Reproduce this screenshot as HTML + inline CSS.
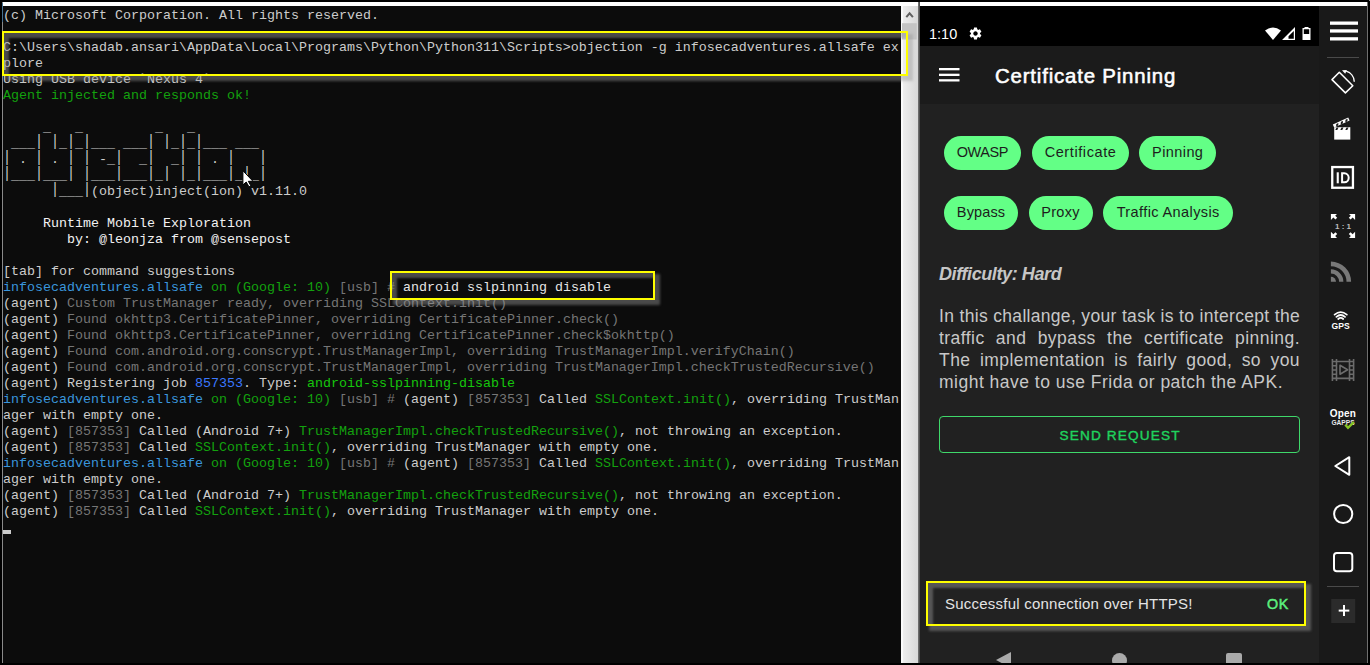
<!DOCTYPE html>
<html><head><meta charset="utf-8">
<style>
html,body{margin:0;padding:0}
body{width:1370px;height:665px;background:#000;overflow:hidden;position:relative}
.abs{position:absolute}
#topbar{left:3px;top:2px;width:1364px;height:4px;background:#fff}
#lline{left:2px;top:2px;width:1px;height:661px;background:#8a8a8a}
#term{left:3px;top:6px;width:898px;height:657px;background:#0c0c0c;overflow:hidden}
.r{position:absolute;left:0;height:16px;line-height:16px;margin-top:2px;white-space:pre;font-family:"Liberation Mono",monospace;font-size:13.34px;color:#cccccc}
.vb{font-style:normal;display:inline-block;transform:scaleY(1.18);transform-origin:50% 100%}
.g{color:#13a10e}.G{color:#16c60c}.b{color:#3a96dd}.B{color:#3b78ff}.k{color:#767676}.w{color:#f2f2f2}
#scroll{left:901px;top:6px;width:17px;height:657px;background:linear-gradient(90deg,#fafafa 0,#fafafa 1.5px,#ededed 2px,#d8d8d8 100%)}
#sdiv{left:918px;top:2px;width:2px;height:661px;background:linear-gradient(90deg,#7a7a7a,#404040)}
#phone{left:920px;top:6px;width:399px;height:657px;background:#212121;overflow:hidden;font-family:"Liberation Sans",sans-serif}
#side{left:1319px;top:6px;width:48px;height:657px;background:#191919}
#rline{left:1367px;top:2px;width:1px;height:661px;background:#707070}
.chip{position:absolute;height:34px;line-height:32.6px;border-radius:17px;background:#63ff86;color:#1d1d1d;font-size:14.5px;text-align:center;white-space:nowrap}
.para{font-size:17.5px;line-height:21.8px;color:#c8c8c8}
.pl{text-align:justify;text-align-last:justify;white-space:nowrap;height:21.8px}
.yb{position:absolute;border:2px solid #ffff00;box-sizing:border-box;box-shadow:4px 4px 2.5px 1px rgba(150,150,150,0.45),inset 4px 4px 2.5px 1px rgba(150,150,150,0.45)}
</style></head><body>
<div class="abs" id="lline"></div>
<div class="abs" style="left:2px;top:3px;width:1px;height:19px;background:#46708f"></div>
<div class="abs" id="topbar"></div>
<div class="abs" id="term">
<div class="r" style="top:0px">(c) Microsoft Corporation. All rights reserved.</div>
<div class="r" style="top:32px">C:\Users\shadab.ansari\AppData\Local\Programs\Python\Python311\Scripts&gt;objection -g infosecadventures.allsafe ex</div>
<div class="r" style="top:48px">plore</div>
<div class="r" style="top:64px">Using USB device `Nexus 4`</div>
<div class="r g" style="top:80px">Agent injected and responds ok!</div>
<div class="r" style="top:112px">     _   _         _   _</div>
<div class="r" style="top:128px"> ___<i class="vb">|</i> <i class="vb">|</i>_<i class="vb">|</i>_<i class="vb">|</i>___ ___<i class="vb">|</i> <i class="vb">|</i>_<i class="vb">|</i>_<i class="vb">|</i>___ ___</div>
<div class="r" style="top:144px"><i class="vb">|</i> . <i class="vb">|</i> . <i class="vb">|</i> <i class="vb">|</i> -_<i class="vb">|</i>  _<i class="vb">|</i>  _<i class="vb">|</i> <i class="vb">|</i> . <i class="vb">|</i>   <i class="vb">|</i></div>
<div class="r" style="top:160px"><i class="vb">|</i>___<i class="vb">|</i>___<i class="vb">|</i> <i class="vb">|</i>___<i class="vb">|</i>___<i class="vb">|</i>_<i class="vb">|</i> <i class="vb">|</i>_<i class="vb">|</i>___<i class="vb">|</i>_<i class="vb">|</i>_<i class="vb">|</i></div>
<div class="r" style="top:176px">      <i class="vb">|</i>___<i class="vb">|</i>(object)inject(ion) v1.11.0</div>
<div class="r w" style="top:208px">     Runtime Mobile Exploration</div>
<div class="r w" style="top:224px">        by: @leonjza from @sensepost</div>
<div class="r" style="top:256px">[tab] for command suggestions</div>
<div class="r" style="top:272px"><span class="b">infosecadventures.allsafe</span> <span class="g">on (Google: 10)</span> <span class="k">[usb]</span> <span class="k">#</span> <span style="color:#e6e6e6">android sslpinning disable</span></div>
<div class="r" style="top:288px">(agent) <span class="k">Custom TrustManager ready, overriding SSLContext.init()</span></div>
<div class="r" style="top:304px">(agent) <span class="k">Found okhttp3.CertificatePinner, overriding CertificatePinner.check()</span></div>
<div class="r" style="top:320px">(agent) <span class="k">Found okhttp3.CertificatePinner, overriding CertificatePinner.check$okhttp()</span></div>
<div class="r" style="top:336px">(agent) <span class="k">Found com.android.org.conscrypt.TrustManagerImpl, overriding TrustManagerImpl.verifyChain()</span></div>
<div class="r" style="top:352px">(agent) <span class="k">Found com.android.org.conscrypt.TrustManagerImpl, overriding TrustManagerImpl.checkTrustedRecursive()</span></div>
<div class="r" style="top:368px">(agent) Registering job <span class="B">857353</span>. Type: <span class="G">android-sslpinning-disable</span></div>
<div class="r" style="top:384px"><span class="b">infosecadventures.allsafe</span> <span class="g">on (Google: 10)</span> <span class="k">[usb]</span> <span class="k">#</span> (agent) <span class="k">[857353]</span> Called <span class="g">SSLContext.init()</span>, overriding TrustMan</div>
<div class="r" style="top:400px">ager with empty one.</div>
<div class="r" style="top:416px">(agent) <span class="k">[857353]</span> Called (Android 7+) <span class="g">TrustManagerImpl.checkTrustedRecursive()</span>, not throwing an exception.</div>
<div class="r" style="top:432px">(agent) <span class="k">[857353]</span> Called <span class="g">SSLContext.init()</span>, overriding TrustManager with empty one.</div>
<div class="r" style="top:448px"><span class="b">infosecadventures.allsafe</span> <span class="g">on (Google: 10)</span> <span class="k">[usb]</span> <span class="k">#</span> (agent) <span class="k">[857353]</span> Called <span class="g">SSLContext.init()</span>, overriding TrustMan</div>
<div class="r" style="top:464px">ager with empty one.</div>
<div class="r" style="top:480px">(agent) <span class="k">[857353]</span> Called (Android 7+) <span class="g">TrustManagerImpl.checkTrustedRecursive()</span>, not throwing an exception.</div>
<div class="r" style="top:496px">(agent) <span class="k">[857353]</span> Called <span class="g">SSLContext.init()</span>, overriding TrustManager with empty one.</div>
<div class="abs" style="left:0;top:524px;width:8px;height:4px;background:#cccccc"></div>
</div>
<div class="abs" id="scroll"></div>
<div class="abs" id="sdiv"></div>
<svg class="abs" style="left:901px;top:6px" width="17" height="40" viewBox="901 6 17 40"><path d="M906.3 17.2 L909.6 13.4 L912.9 17.2" fill="none" stroke="#606060" stroke-width="2"/><rect x="902" y="23.2" width="14.8" height="16.3" fill="#c4c4c4"/></svg>
<div class="abs" id="phone">
<div class="abs" style="left:0;top:0;width:399px;height:40px;background:#000"></div>
<div class="abs" style="left:9px;top:20px;font-size:14.5px;line-height:16px;color:#fff">1:10</div>
<svg class="abs" style="left:48px;top:20px" width="15" height="15" viewBox="0 0 24 24"><path fill="#fff" d="M19.14 12.94c.04-.3.06-.61.06-.94 0-.32-.02-.64-.07-.94l2.03-1.58a.49.49 0 0 0 .12-.61l-1.92-3.32a.488.488 0 0 0-.59-.22l-2.39.96c-.5-.38-1.03-.7-1.62-.94l-.36-2.54a.484.484 0 0 0-.48-.41h-3.84c-.24 0-.43.17-.47.41l-.36 2.54c-.59.24-1.13.57-1.62.94l-2.39-.96c-.22-.08-.47 0-.59.22L2.74 8.87c-.12.21-.08.47.12.61l2.03 1.58c-.05.3-.09.63-.09.94s.02.64.07.94l-2.03 1.58a.49.49 0 0 0-.12.61l1.92 3.32c.12.22.37.29.59.22l2.39-.96c.5.38 1.03.7 1.62.94l.36 2.54c.05.24.24.41.48.41h3.84c.24 0 .44-.17.47-.41l.36-2.54c.59-.24 1.13-.56 1.62-.94l2.39.96c.22.08.47 0 .59-.22l1.92-3.32c.12-.22.07-.47-.12-.61l-2.01-1.58zM12 15.6c-1.98 0-3.6-1.62-3.6-3.6s1.62-3.6 3.6-3.6 3.6 1.62 3.6 3.6-1.62 3.6-3.6 3.6z"/></svg>
<svg class="abs" style="left:344px;top:20px" width="50" height="15" viewBox="0 0 50 15">
<path fill="#fff" d="M1 4.5 Q9 -1.5 17 4.5 L9 14 Z"/>
<path fill="#fff" fill-rule="evenodd" d="M18 14 L31 1 L31 14 Z M24.5 12.8 L29.8 12.8 L29.8 5 L24.5 10.3 Z"/>
<path fill="#fff" fill-rule="evenodd" d="M40.5 1 L44.5 1 L44.5 2 L46.5 2 L46.5 14 L38.5 14 L38.5 2 L40.5 2 Z M39.8 3.3 L45.2 3.3 L45.2 8 L39.8 8 Z"/>
</svg>
<div class="abs" style="left:0;top:40px;width:399px;height:58px;background:#1b1b1b"></div>
<svg class="abs" style="left:19px;top:61px" width="21" height="16" viewBox="0 0 21 16"><rect x="0" y="1" width="20.5" height="2.3" fill="#fff"/><rect x="0" y="6.7" width="20.5" height="2.3" fill="#fff"/><rect x="0" y="12.2" width="20.5" height="2.3" fill="#fff"/></svg>
<div class="abs" style="left:75px;top:54.5px;font-size:20.4px;letter-spacing:0.82px;-webkit-text-stroke:0.55px #fff;line-height:30px;font-weight:normal;color:#fff;white-space:nowrap">Certificate Pinning</div>
<div class="chip" style="left:24px;top:130px;width:77px;letter-spacing:-0.45px;text-indent:-0.45px">OWASP</div>
<div class="chip" style="left:111.5px;top:130px;width:97.5px;letter-spacing:0.59px;text-indent:0.59px">Certificate</div>
<div class="chip" style="left:219px;top:130px;width:77px;letter-spacing:0.42px;text-indent:0.42px">Pinning</div>
<div class="chip" style="left:24px;top:190.2px;width:74px;letter-spacing:0.12px">Bypass</div>
<div class="chip" style="left:108.5px;top:190.2px;width:64px;letter-spacing:0.25px">Proxy</div>
<div class="chip" style="left:183px;top:190.2px;width:130px;letter-spacing:0.4px;text-indent:0.4px">Traffic Analysis</div>
<div class="abs" style="left:19px;top:256px;font-size:18px;letter-spacing:-0.4px;line-height:24px;font-weight:bold;font-style:italic;color:#c6c6c6;white-space:nowrap">Difficulty: Hard</div>
<div class="abs para" style="left:19px;top:300px;width:361px">
<div class="pl" style="letter-spacing:0.3px">In this challange, your task is to intercept the</div>
<div class="pl" style="letter-spacing:0.45px">traffic and bypass the certificate pinning.</div>
<div class="pl" style="letter-spacing:0.45px">The implementation is fairly good, so you</div>
<div class="pl" style="text-align-last:left;letter-spacing:0.49px;margin-top:1px">might have to use Frida or patch the APK.</div>
</div>
<div class="abs" style="left:19px;top:410px;width:361px;height:36.5px;box-sizing:border-box;border:1.5px solid #3fd86a;border-radius:4px"></div>
<div class="abs" style="left:19px;top:410px;width:361px;height:36.5px;line-height:39.4px;text-align:center;font-size:13.6px;font-weight:normal;-webkit-text-stroke:0.4px #1fd45e;letter-spacing:1.15px;text-indent:1.15px;color:#1fd45e">SEND REQUEST</div>
<div class="abs" style="left:8px;top:577px;width:378px;height:43px;background:#222"></div>
<div class="abs" style="left:25px;top:590px;font-size:15px;letter-spacing:0.23px;line-height:16px;color:#e4e4e4;white-space:nowrap">Successful connection over HTTPS!</div>
<div class="abs" style="left:347px;top:589.8px;font-size:14.3px;font-weight:normal;-webkit-text-stroke:0.5px #5cf07e;letter-spacing:0.7px;line-height:16px;color:#5cf07e;white-space:nowrap">OK</div>
<div class="abs" style="left:76px;top:646px;width:0;height:0;border-right:15px solid #aaa;border-top:8px solid transparent;border-bottom:8px solid transparent"></div>
<div class="abs" style="left:192px;top:647px;width:15px;height:15px;border-radius:50%;background:#aaa"></div>
<div class="abs" style="left:306px;top:646.5px;width:16px;height:16px;border-radius:2px;background:#aaa"></div>
</div>
<div class="abs" id="side"></div>
<svg class="abs" style="left:1319px;top:0" width="48" height="665" viewBox="1319 0 48 665">
<g fill="#fff"><rect x="1330" y="21.5" width="28" height="3.3"/><rect x="1330" y="29.3" width="28" height="3.3"/><rect x="1330" y="37.2" width="28" height="3.3"/></g>
<rect x="1327" y="57" width="32" height="1" fill="#4a4a4a"/>
<g fill="none" stroke="#fff" stroke-width="1.55" stroke-linejoin="round">
<path d="M1332 79.6 L1339.3 72.3 L1352.8 85.7 L1345.4 92.9 Z"/>
<path d="M1346.2 71.2 A11.4 11.4 0 0 1 1354.3 81.8" stroke-width="1.4"/>
</g>
<path fill="#fff" d="M1342 70.3 L1346.9 70 L1345.2 73.8 Z"/>
<g fill="#fff">
<rect x="1334.2" y="127.2" width="16.1" height="12.4"/>
<path d="M1332.8 124.4 L1348.2 117.4 L1349.6 120.6 L1334.2 127.6 Z"/>
</g>
<g fill="#1b1b1b">
<path d="M1336.5 127.4 L1338.5 127.4 L1337.3 129.9 L1335.3 129.9 Z"/>
<path d="M1341.5 127.4 L1343.5 127.4 L1342.3 129.9 L1340.3 129.9 Z"/>
<path d="M1346.5 127.4 L1348.5 127.4 L1347.3 129.9 L1345.3 129.9 Z"/>
<path d="M1336.3 123.9 L1338.4 123.0 L1338.2 125.6 L1336.1 126.5 Z"/>
<path d="M1340.9 121.8 L1343.0 120.9 L1342.8 123.5 L1340.7 124.4 Z"/>
<path d="M1345.5 119.7 L1347.6 118.8 L1347.4 121.4 L1345.3 122.3 Z"/>
</g>
<rect x="1332.25" y="167.05" width="20.7" height="20.7" fill="none" stroke="#fff" stroke-width="2.3"/>
<rect x="1336.7" y="172.3" width="2.1" height="11" fill="#fff"/>
<path d="M1342.1 173.3 h2.3 a4.3 4.5 0 0 1 0 9 h-2.3 z" fill="none" stroke="#fff" stroke-width="2"/>
<g fill="#fff">
<path d="M1330.9 213.9 L1337 213.9 L1335.2 215.7 L1337.2 217.7 L1335.4 219.5 L1333.4 217.5 L1330.9 220 Z"/>
<path d="M1355.1 213.9 L1349 213.9 L1350.8 215.7 L1348.8 217.7 L1350.6 219.5 L1352.6 217.5 L1355.1 220 Z"/>
<path d="M1330.9 237.9 L1337 237.9 L1335.2 236.1 L1337.2 234.1 L1335.4 232.3 L1333.4 234.3 L1330.9 231.8 Z"/>
<path d="M1355.1 237.9 L1349 237.9 L1350.8 236.1 L1348.8 234.1 L1350.6 232.3 L1352.6 234.3 L1355.1 231.8 Z"/>
</g>
<text x="1343" y="229" font-family="Liberation Sans" font-weight="bold" font-size="8" fill="#bdbdbd" text-anchor="middle">1 : 1</text>
<g fill="#787878">
<path d="M1330.9 281.8 L1330.9 276.7 A5.1 5.1 0 0 1 1336 281.8 Z"/>
<path d="M1330.9 269.3 A12.5 12.5 0 0 1 1343.4 281.8 L1339.1 281.8 A8.2 8.2 0 0 0 1330.9 273.6 Z"/>
<path d="M1330.9 261.6 A20.2 20.2 0 0 1 1351.1 281.8 L1346.5 281.8 A15.6 15.6 0 0 0 1330.9 266.2 Z"/>
</g>
<g fill="none" stroke="#fff" stroke-width="1.8" stroke-linecap="round">
<path d="M1334.6 314.6 Q1340.7 309.6 1346.8 314.6"/>
<path d="M1336.4 316.9 Q1340.7 313.2 1345 316.9"/>
<path d="M1338.2 319 Q1340.7 316.8 1343.2 319"/>
</g>
<text x="1340.6" y="328.9" font-family="Liberation Sans" font-weight="bold" font-size="8.6" fill="#fff" text-anchor="middle">GPS</text>
<g fill="none" stroke="#6c6c6c" stroke-width="1.6">
<path d="M1332.4 358.9 V380.9 M1336.5 358.9 V380.9 M1349.5 358.9 V380.9 M1353.6 358.9 V380.9"/>
<path d="M1332.4 361.5 H1353.6 M1332.4 378.4 H1353.6 M1332.4 365.8 H1336.5 M1332.4 370 H1336.5 M1332.4 374.2 H1336.5 M1349.5 365.8 H1353.6 M1349.5 370 H1353.6 M1349.5 374.2 H1353.6"/>
<path d="M1340 365.2 L1347.6 369.7 L1340 374.2 Z" stroke-linejoin="round"/>
</g>
<text x="1343" y="417.2" font-family="Liberation Sans" font-weight="bold" font-size="10" fill="#fff" text-anchor="middle" letter-spacing="0.2">Open</text>
<text x="1343" y="425.2" font-family="Liberation Sans" font-weight="bold" font-size="6.6" fill="#e8e8e8" text-anchor="middle">GAPPS</text>
<path d="M1345.2 424.8 L1348 427.8 L1353.8 422.2" fill="none" stroke="#86c424" stroke-width="2.4"/>
<g fill="none" stroke="#fff" stroke-width="2" stroke-linejoin="round">
<path d="M1335.3 466 L1349.3 457.2 L1349.3 474.8 Z"/>
<circle cx="1343.2" cy="514" r="9.1"/>
<rect x="1334" y="553" width="18.3" height="18.3" rx="2.8"/>
</g>
<rect x="1327" y="586" width="32" height="1" fill="#4a4a4a"/>
<rect x="1331.2" y="599" width="24" height="24" fill="#2b2b2b"/>
<g fill="#fff"><rect x="1338.7" y="609.6" width="10.6" height="2"/><rect x="1343" y="605" width="2" height="11"/></g>
</svg>
<div class="abs" id="rline"></div>
<div class="yb" style="left:2px;top:31px;width:906px;height:45px"></div>
<div class="yb" style="left:390px;top:271px;width:264.8px;height:29px;border-width:2.4px"></div>
<div class="yb" style="left:926px;top:581px;width:380.3px;height:45px;border-width:2.5px"></div>
<svg class="abs" style="left:236px;top:165px" width="24" height="27" viewBox="236 165 24 27"><path d="M242.9 170.7 L242.9 185 L246.2 182 L249 186.8 L251 186 L248.3 181.3 L253 181.3 Z" fill="#fff" stroke="#000" stroke-width="1" stroke-linejoin="miter"/></svg>
<div class="abs" style="left:1369px;top:0;width:1px;height:1px;background:#999"></div>
</body></html>
